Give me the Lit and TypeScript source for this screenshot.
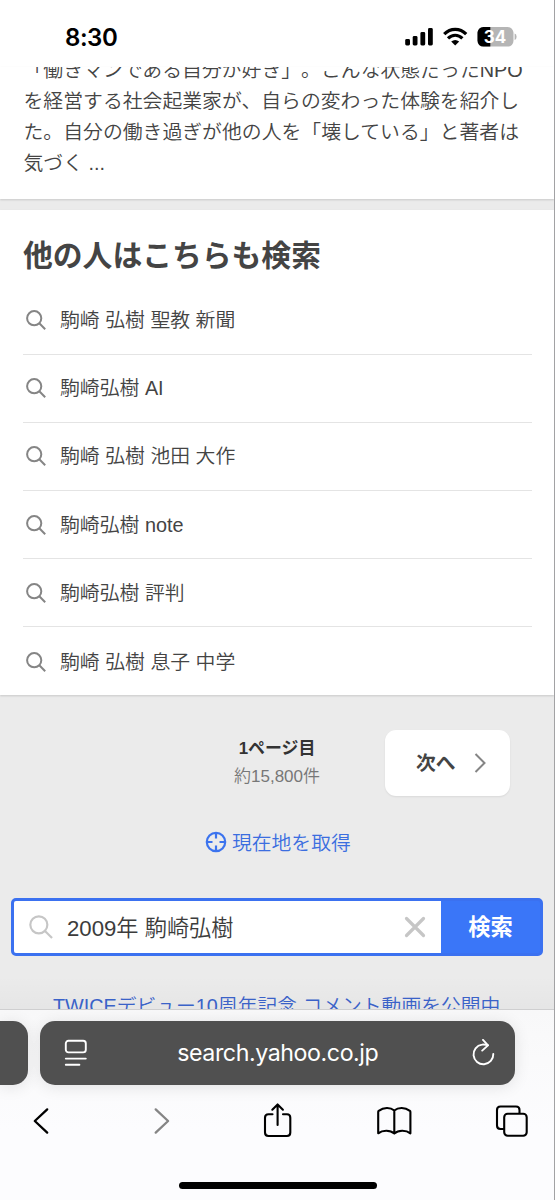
import { LitElement, html, css, svg } from "lit";
import { customElement } from "lit/decorators.js";

const related = [
  "駒崎 弘樹 聖教 新聞",
  "駒崎弘樹 AI",
  "駒崎 弘樹 池田 大作",
  "駒崎弘樹 note",
  "駒崎弘樹 評判",
  "駒崎 弘樹 息子 中学",
];

const magnifier = svg`<circle cx="8.2" cy="8.2" r="7.1"></circle><path d="M13.3 13.3 L19.2 19.2"></path>`;

@customElement("status-bar")
class StatusBar extends LitElement {
  static styles = css`
    :host {
      display: flex;
      align-items: flex-start;
      height: 67px;
      padding: 0 37px 0 65px;
      box-sizing: border-box;
      background: #fff;
      font-family: Inter, sans-serif;
    }
    .time {
      flex: 1;
      margin-top: 23px;
      font-size: 24px;
      line-height: 30px;
      font-weight: 600;
      color: #000;
      letter-spacing: -0.45px;
    }
    .icons {
      display: block;
      margin-top: 26px;
    }
    .level {
      font: 700 17px Inter, sans-serif;
      fill: #fff;
    }
  `;
  render() {
    return html`
      <div class="time">8:30</div>
      <svg class="icons" width="112" height="22" viewBox="0 0 112 22">
        <rect x="0.2" y="13" width="4.8" height="6.5" rx="1.4"></rect>
        <rect x="7.7" y="10" width="4.8" height="9.5" rx="1.4"></rect>
        <rect x="15.4" y="6" width="4.8" height="13.5" rx="1.4"></rect>
        <rect x="23" y="2" width="4.8" height="17.5" rx="1.4"></rect>
        <g fill="none" stroke="#000" stroke-width="3.2">
          <path d="M39.2 8.2 C45.5 1.8 54.9 1.8 61.2 8.2"></path>
          <path d="M43 12.4 C47.3 8.2 53.1 8.2 57.4 12.4"></path>
        </g>
        <path d="M50.2 19.4 L46.2 15.6 Q50.2 12.2 54.2 15.6 Z"></path>
        <clipPath id="body"><rect x="72.5" y="1" width="36" height="19.6" rx="5.8"></rect></clipPath>
        <g clip-path="url(#body)">
          <rect x="72" y="1" width="37" height="20" fill="#b5b5b5"></rect>
          <rect x="72" y="1" width="13.3" height="20"></rect>
        </g>
        <path d="M109.6 7.5 Q111.6 8 111.6 10.8 Q111.6 13.6 109.6 14.1 Z" fill="#b5b5b5"></path>
        <text class="level" x="90" y="17" text-anchor="middle">34</text>
      </svg>
    `;
  }
}

@customElement("related-searches")
class RelatedSearches extends LitElement {
  static styles = css`
    :host {
      display: block;
      height: 485px;
      box-sizing: border-box;
      padding: 25px 22px 0 23px;
      background: #fff;
      box-shadow: 0 1px 2px rgba(0, 0, 0, 0.15);
      color: #444;
    }
    h2 {
      margin: 0 0 9.5px;
      font-size: 29.8px;
      line-height: 42px;
      font-weight: 700;
    }
    .row {
      display: flex;
      align-items: center;
      height: 68.2px;
      box-sizing: border-box;
      border-bottom: 1px solid #e4e4e4;
      font-size: 19.85px;
    }
    .row:last-child {
      border-bottom: 0;
    }
    .row span {
      padding-bottom: 3px;
    }
    svg {
      margin: 0 14px 0 3px;
      fill: none;
      stroke: #858585;
      stroke-width: 2;
    }
  `;
  render() {
    return html`
      <h2>他の人はこちらも検索</h2>
      ${related.map(
        (t) => html`<div class="row">
          <svg width="20" height="20" viewBox="0 0 20 20">${magnifier}</svg><span>${t}</span>
        </div>`
      )}
    `;
  }
}

@customElement("browser-toolbar")
class BrowserToolbar extends LitElement {
  static styles = css`
    :host {
      display: block;
      height: 191px;
      box-sizing: border-box;
      border-top: 1px solid #cfcfd0;
      padding-top: 11px;
      overflow: hidden;
      background: linear-gradient(#f8f8f9, #fafafb 50px, #fcfcfe 120px);
    }
    .bars {
      display: flex;
      gap: 12px;
    }
    .side {
      width: 28px;
      height: 63.5px;
      border-radius: 0 15px 15px 0;
      background: #505050;
      box-shadow: 0 2px 16px rgba(0, 0, 0, 0.1);
    }
    .address {
      display: flex;
      align-items: center;
      width: 474.5px;
      height: 63.5px;
      box-sizing: border-box;
      padding: 0 20px 0 24px;
      border-radius: 15px;
      background: #505050;
      color: #fff;
      box-shadow: 0 2px 16px rgba(0, 0, 0, 0.1);
      fill: none;
      stroke: #fff;
      stroke-width: 1.9;
    }
    .url {
      flex: 1;
      text-align: center;
      margin-right: 3px;
      font: 400 23.2px/30px Inter, sans-serif;
      letter-spacing: -0.42px;
      stroke: none;
    }
    .actions {
      display: flex;
      justify-content: space-between;
      height: 40px;
      margin-top: 16px;
      padding: 0 24px 0 23px;
    }
    .actions svg {
      fill: none;
      stroke: #000;
      stroke-width: 2.1;
      stroke-linecap: round;
      stroke-linejoin: round;
    }
    .actions .off {
      stroke: #858585;
    }
    .home {
      width: 198px;
      height: 7px;
      margin: 41px auto 0 179px;
      border-radius: 4px;
      background: #000;
    }
  `;
  render() {
    return html`
      <div class="bars">
        <div class="side"></div>
        <div class="address">
          <svg width="24" height="28" viewBox="0 0 24 28" stroke-linecap="round">
            <rect x="1.8" y="1.8" width="20" height="11.6" rx="2.6"></rect>
            <path d="M1.8 19.6 H21.8 M1.8 25.8 H15.4"></path>
          </svg>
          <div class="url">search.yahoo.co.jp</div>
          <svg width="24" height="28" viewBox="0 0 24 28" stroke-linecap="round" stroke-linejoin="round">
            <path d="M16.8 6.2 C14.8 5.4 12.8 5.3 11 5.6 A9.9 9.9 0 1 0 22.3 15"></path>
            <path d="M12 0.9 L17 6.4 L11.2 11.6"></path>
          </svg>
        </div>
      </div>
      <div class="actions">
        <svg width="36" height="40" viewBox="23 1100 36 40"><path d="M47.2 1108.4 L34.8 1120 L47.2 1131.6" stroke-width="2.3"></path></svg>
        <svg class="off" width="36" height="40" viewBox="141 1100 36 40"><path d="M155.7 1108.4 L168.1 1120 L155.7 1131.6" stroke-width="2.3"></path></svg>
        <svg width="36" height="40" viewBox="259 1100 36 40">
          <path d="M272.5 1113.3 H268.5 Q265 1113.3 265 1116.8 V1131.5 Q265 1135 268.5 1135 H287 Q290.3 1135 290.3 1131.5 V1116.8 Q290.3 1113.3 287 1113.3 H283"></path>
          <path d="M277.6 1124 V1104 M272.3 1108.7 L277.6 1103.4 L282.9 1108.7"></path>
        </svg>
        <svg width="36" height="40" viewBox="376.3 1100 36 40">
          <path d="M394.6 1109.5 C390.5 1106 384 1106.2 379 1109.8 Q378.5 1110.2 378.5 1111 V1132.3 C383 1128.8 390.5 1128.8 394.6 1132.6 C398.7 1128.8 406.2 1128.8 410.7 1132.3 V1111 Q410.7 1110.2 410.2 1109.8 C405.2 1106.2 398.7 1106 394.6 1109.5 V1132.5"></path>
        </svg>
        <svg width="36" height="40" viewBox="494 1100 36 40">
          <path d="M503.5 1128 H500.5 Q497 1128 497 1124.5 V1109 Q497 1105.5 500.5 1105.5 H516 Q519.5 1105.5 519.5 1109 V1112"></path>
          <rect x="504.2" y="1112.7" width="22.5" height="22" rx="3.5"></rect>
        </svg>
      </div>
      <div class="home"></div>
    `;
  }
}

@customElement("app-root")
class AppRoot extends LitElement {
  static styles = css`
    :host {
      display: block;
      width: 555px;
      height: 1200px;
      box-sizing: border-box;
      overflow: hidden;
      border-right: 1px solid #a2a2a4;
      background: #ebebeb;
      color: #444;
      font-family: "Liberation Sans", "Noto Sans CJK JP", sans-serif;
      font-weight: 350;
      text-spacing-trim: space-all;
    }
    .snippet {
      height: 132px;
      overflow: hidden;
      margin-bottom: 11px;
      background: #fff;
      box-shadow: 0 1px 2px rgba(0, 0, 0, 0.15);
      font-size: 19.85px;
      line-height: 31.2px;
      white-space: nowrap;
    }
    .text {
      margin: -12.5px 0 0 23.5px;
    }
    .pager {
      display: grid;
      grid-template-columns: 1fr 186px 125px;
      width: 510px;
      height: 66px;
      margin-top: 35px;
    }
    .count {
      grid-column: 2;
      margin-left: -15px;
      width: 186px;
      text-align: center;
      font-size: 17px;
      line-height: 28px;
      color: #777;
      padding-top: 5px;
      justify-self: start;
    }
    .count b {
      display: block;
      font-size: 16.9px;
      font-weight: 700;
      color: #333;
    }
    .next {
      grid-column: 3;
      display: flex;
      align-items: center;
      justify-content: space-between;
      box-sizing: border-box;
      padding: 0 23px 0 31px;
      border-radius: 11px;
      background: #fff;
      box-shadow: 0 1px 2px rgba(0, 0, 0, 0.08);
      font-size: 19.8px;
      font-weight: 700;
    }
    .next span {
      padding-bottom: 3px;
    }
    .next svg {
      fill: none;
      stroke: #858585;
      stroke-width: 2;
    }
    .locate {
      display: flex;
      align-items: center;
      gap: 5px;
      height: 30px;
      margin: 31px 0 0 205px;
      font-size: 19.8px;
      color: #3b6ee0;
    }
    .locate span {
      padding-bottom: 2px;
    }
    .locate svg {
      fill: none;
      stroke: #3b73ee;
      stroke-width: 2.2;
    }
    .search {
      display: flex;
      width: 532px;
      height: 58px;
      margin: 41px 0 0 11px;
      box-sizing: border-box;
      border: 3px solid #3b71f0;
      border-radius: 5px;
      background: #3a76f8;
    }
    .field {
      display: flex;
      align-items: center;
      width: 427px;
      box-sizing: border-box;
      padding: 0 14px 0 15px;
      border-radius: 2px 0 0 2px;
      background: #fff;
      font-size: 22.2px;
    }
    .field svg {
      fill: none;
      stroke: #c6c6c6;
    }
    .query {
      flex: 1;
      margin-left: 14px;
      padding-bottom: 2px;
      color: #3c3c3c;
    }
    .submit {
      flex: 1;
      text-align: center;
      font-size: 22.3px;
      line-height: 54px;
      font-weight: 700;
      color: #fff;
    }
    .promo {
      height: 53px;
      overflow: hidden;
      box-sizing: border-box;
      padding: 35px 0 0 53px;
      font-size: 19.8px;
      line-height: 30px;
      color: #3a62c8;
      white-space: nowrap;
      background: linear-gradient(rgba(0, 0, 0, 0) 20px, rgba(0, 0, 0, 0.025));
    }
  `;
  render() {
    return html`
      <status-bar></status-bar>
      <div class="snippet">
        <div class="text">
          「働きマンである自分が好き」。こんな状態だったNPO<br />を経営する社会起業家が、自らの変わった体験を紹介し<br />た。自分の働き過ぎが他の人を「壊している」と著者は<br />気づく ...
        </div>
      </div>
      <related-searches></related-searches>
      <div class="pager">
        <div class="count"><b>1ページ目</b>約15,800件</div>
        <div class="next">
          <span>次へ</span>
          <svg width="16" height="20" viewBox="0 0 16 20"><path d="M4.5 1 L13.5 10 L4.5 19"></path></svg>
        </div>
      </div>
      <div class="locate">
        <svg width="22" height="22" viewBox="0 0 22 22">
          <circle cx="11" cy="11" r="9.2"></circle>
          <path d="M11 2 V7.5 M11 14.5 V20 M2 11 H7.5 M14.5 11 H20"></path>
        </svg>
        <span>現在地を取得</span>
      </div>
      <div class="search">
        <div class="field">
          <svg width="24" height="24" viewBox="0 0 20 20" stroke-width="1.8">${magnifier}</svg>
          <span class="query">2009年 駒崎弘樹</span>
          <svg width="24" height="24" viewBox="0 0 24 24" stroke-width="3.2" stroke-linecap="round">
            <path d="M3.5 3.5 L20.5 20.5 M20.5 3.5 L3.5 20.5"></path>
          </svg>
        </div>
        <div class="submit">検索</div>
      </div>
      <div class="promo">TWICEデビュー10周年記念 コメント動画を公開中</div>
      <browser-toolbar></browser-toolbar>
    `;
  }
}
